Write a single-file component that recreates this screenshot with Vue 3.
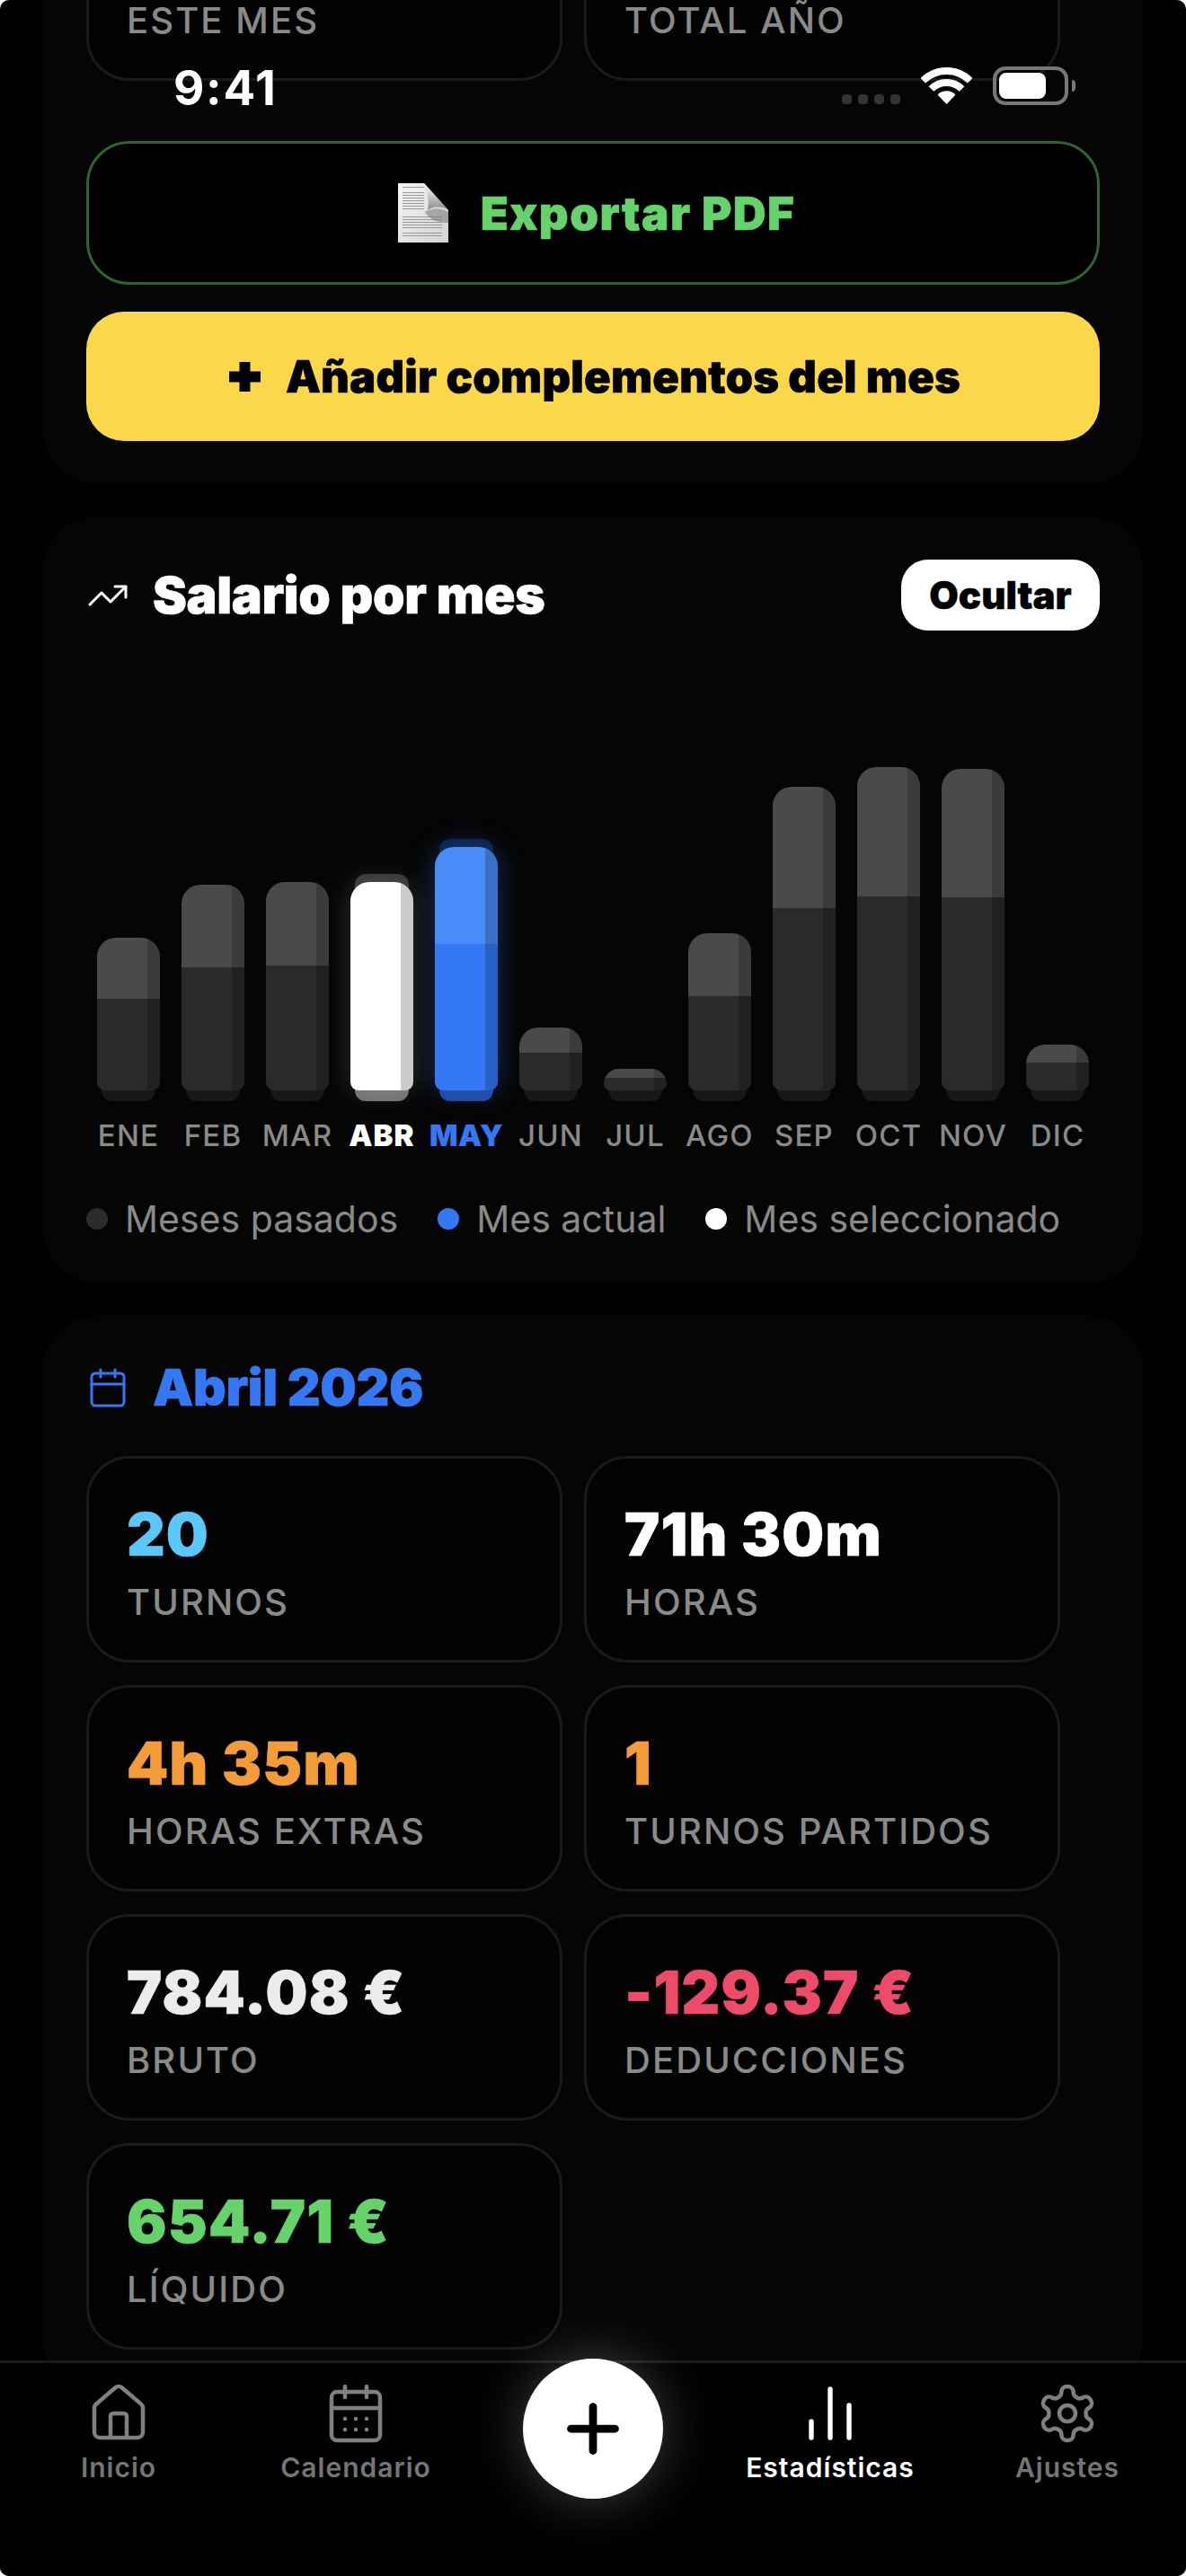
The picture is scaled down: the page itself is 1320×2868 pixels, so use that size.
<script setup>
const topStats = [
  { label: 'ESTE MES' },
  { label: 'TOTAL AÑO' },
]
const months = [
  { m: 'ENE', h: 170 }, { m: 'FEB', h: 229 }, { m: 'MAR', h: 232 },
  { m: 'ABR', h: 232, kind: 'sel' }, { m: 'MAY', h: 271, kind: 'now' }, { m: 'JUN', h: 70 },
  { m: 'JUL', h: 24 }, { m: 'AGO', h: 175 }, { m: 'SEP', h: 338 },
  { m: 'OCT', h: 360 }, { m: 'NOV', h: 358 }, { m: 'DIC', h: 51 },
]
const legend = [
  { t: 'Meses pasados', c: 'past' },
  { t: 'Mes actual', c: 'now' },
  { t: 'Mes seleccionado', c: 'sel' },
]
const stats = [
  { v: '20', l: 'TURNOS', c: 'sky' },
  { v: '71h 30m', l: 'HORAS', c: 'white' },
  { v: '4h 35m', l: 'HORAS EXTRAS', c: 'orange' },
  { v: '1', l: 'TURNOS PARTIDOS', c: 'orange' },
  { v: '784.08 €', l: 'BRUTO', c: 'soft' },
  { v: '-129.37 €', l: 'DEDUCCIONES', c: 'red' },
  { v: '654.71 €', l: 'LÍQUIDO', c: 'green' },
]
const docLines = [4, 10, 13, 16, 19, 22, 25, 28, 37, 40, 43, 46, 49, 55, 58]
</script>

<template>
  <div class="screen">
    <div class="status">
      <span class="time">9:41</span>
      <div class="status-right">
        <div class="cell"><i></i><i></i><i></i><i></i></div>
        <svg class="wifi" width="57" height="41" viewBox="0 0 57 41" fill="none" stroke="#fff" stroke-width="8">
          <path d="M2.3 14.8A37 37 0 0 1 54.7 14.8" />
          <path d="M11.5 24A24 24 0 0 1 45.5 24" />
          <path d="M28.5 41L18.5 30.5A14 14 0 0 1 38.5 30.5Z" fill="#fff" stroke="none" />
        </svg>
        <div class="battery"><div class="battery-fill"></div></div>
        <div class="nub"></div>
      </div>
    </div>

    <main class="main">
      <section class="card first">
        <div class="grid">
          <div v-for="s in topStats" :key="s.label" class="stat">
            <div class="val"></div>
            <div class="lab">{{ s.label }}</div>
          </div>
        </div>
        <button class="export">
          <svg width="56" height="66" viewBox="0 0 56 66">
            <defs>
              <linearGradient id="pg" x1="0" y1="0" x2="1" y2="1">
                <stop offset="0" stop-color="#f6f6f6" />
                <stop offset="1" stop-color="#d2d2d2" />
              </linearGradient>
              <linearGradient id="fg" x1="0" y1="0" x2="0" y2="1">
                <stop offset="0" stop-color="#ffffff" />
                <stop offset="1" stop-color="#8a8a8a" />
              </linearGradient>
            </defs>
            <path d="M0 0H29L56 30V66H0Z" fill="url(#pg)" />
            <rect v-for="y in docLines" :key="y" x="5" :y="y" :width="y < 30 ? 24 : 44" height="1" fill="#999" />
            <path d="M30 32C40 26 50 28 56 32V44C46 44 36 42 30 32Z" fill="#777" opacity=".55" />
            <path d="M29 0L56 30C48 25 38 26 33 30C35 20 33 10 29 0Z" fill="url(#fg)" />
          </svg>
          <span>Exportar PDF</span>
        </button>
        <button class="add">
          <svg width="35" height="33" viewBox="0 0 35 33"><path d="M11.5 0h12v10.5h11.500v12h-11.500v10.500h-12v-10.500H0v-12h11.500z" fill="#000" /></svg>
          <span>Añadir complementos del mes</span>
        </button>
      </section>

      <section class="card second">
        <header class="head spaced">
          <div class="title-wrap">
            <svg class="hicon" width="48" height="48" viewBox="0 0 24 24" fill="none" stroke="#fff" stroke-width="1.5" stroke-linecap="round" stroke-linejoin="round">
              <polyline points="22 7 13.5 15.5 8.5 10.5 2 17" />
              <polyline points="16 7 22 7 22 13" />
            </svg>
            <h2>Salario por mes</h2>
          </div>
          <button class="pill">Ocultar</button>
        </header>
        <div class="chart">
          <div v-for="b in months" :key="b.m" class="col">
            <div class="barwrap" :class="b.kind">
              <div v-if="b.kind" class="cap"></div>
              <div class="bar" :style="{ height: b.h + 'px' }">
                <div class="light"></div>
                <div class="dark"></div>
                <div class="side"></div>
              </div>
              <div class="foot"></div>
            </div>
          </div>
        </div>
        <div class="labels">
          <span v-for="b in months" :key="b.m" :class="b.kind">{{ b.m }}</span>
        </div>
        <div class="legend">
          <div v-for="l in legend" :key="l.t" class="leg">
            <i :class="l.c"></i><span>{{ l.t }}</span>
          </div>
        </div>
      </section>

      <section class="card third">
        <header class="head month">
          <svg class="hicon" width="48" height="48" viewBox="0 0 24 24" fill="none" stroke="#3478f6" stroke-width="1.5" stroke-linecap="round" stroke-linejoin="round">
            <path d="M8 2v4M16 2v4M3 10h18" />
            <rect x="3" y="4" width="18" height="18" rx="2" />
          </svg>
          <h2>Abril 2026</h2>
        </header>
        <div class="grid">
          <div v-for="s in stats" :key="s.l" class="stat">
            <div class="val" :class="s.c">{{ s.v }}</div>
            <div class="lab">{{ s.l }}</div>
          </div>
        </div>
      </section>
    </main>

    <nav class="tabs">
      <div class="tab">
        <svg width="72" height="72" viewBox="0 0 24 24" fill="none" stroke="currentColor" stroke-width="1.5" stroke-linecap="round" stroke-linejoin="round">
          <path d="M15 21v-8a1 1 0 0 0-1-1h-4a1 1 0 0 0-1 1v8" />
          <path d="M3 10a2 2 0 0 1 .709-1.528l7-5.999a2 2 0 0 1 2.582 0l7 5.999A2 2 0 0 1 21 10v9a2 2 0 0 1-2 2H5a2 2 0 0 1-2-2z" />
        </svg>
        <span>Inicio</span>
      </div>
      <div class="tab">
        <svg width="72" height="72" viewBox="0 0 24 24" fill="none" stroke="currentColor" stroke-width="1.5" stroke-linecap="round" stroke-linejoin="round">
          <path d="M8 2v4M16 2v4M3 10h18" />
          <rect x="3" y="4" width="18" height="18" rx="2" />
          <path d="M8 14h.01M12 14h.01M16 14h.01M8 18h.01M12 18h.01M16 18h.01" />
        </svg>
        <span>Calendario</span>
      </div>
      <div class="tab fab-tab">
        <button class="fab">
          <svg width="84" height="84" viewBox="0 0 24 24" fill="none" stroke="#000" stroke-width="2.5" stroke-linecap="round">
            <path d="M5 12h14M12 5v14" />
          </svg>
        </button>
      </div>
      <div class="tab active">
        <svg width="72" height="72" viewBox="0 0 24 24" fill="none" stroke="currentColor" stroke-width="1.8" stroke-linecap="round">
          <path d="M5 21v-6M12 21V3M19 21V9" />
        </svg>
        <span>Estadísticas</span>
      </div>
      <div class="tab">
        <svg width="72" height="72" viewBox="0 0 24 24" fill="none" stroke="currentColor" stroke-width="1.5" stroke-linecap="round" stroke-linejoin="round">
          <path d="M12.22 2h-.44a2 2 0 0 0-2 2v.18a2 2 0 0 1-1 1.73l-.43.25a2 2 0 0 1-2 0l-.15-.08a2 2 0 0 0-2.73.73l-.22.38a2 2 0 0 0 .73 2.73l.15.1a2 2 0 0 1 1 1.72v.51a2 2 0 0 1-1 1.74l-.15.09a2 2 0 0 0-.73 2.73l.22.38a2 2 0 0 0 2.73.73l.15-.08a2 2 0 0 1 2 0l.43.25a2 2 0 0 1 1 1.73V20a2 2 0 0 0 2 2h.44a2 2 0 0 0 2-2v-.18a2 2 0 0 1 1-1.73l.43-.25a2 2 0 0 1 2 0l.15.08a2 2 0 0 0 2.73-.73l.22-.39a2 2 0 0 0-.73-2.73l-.15-.08a2 2 0 0 1-1-1.74v-.5a2 2 0 0 1 1-1.74l.15-.09a2 2 0 0 0 .73-2.73l-.22-.38a2 2 0 0 0-2.73-.73l-.15.08a2 2 0 0 1-2 0l-.43-.25a2 2 0 0 1-1-1.73V4a2 2 0 0 0-2-2z" />
          <circle cx="12" cy="12" r="3" />
        </svg>
        <span>Ajustes</span>
      </div>
    </nav>
  </div>
</template>

<style>
html, body { margin: 0; background: #fff; }
</style>

<style scoped>
* { box-sizing: border-box; }
.screen {
  position: relative;
  width: 1320px;
  height: 2868px;
  background: #000;
  border-radius: 10px;
  overflow: hidden;
  display: flex;
  flex-direction: column;
  font-family: Inter, "Liberation Sans", sans-serif;
  color: #fff;
}
button { font-family: inherit; border: 0; margin: 0; padding: 0; }

.status {
  position: absolute;
  z-index: 5;
  top: 72px;
  left: 0;
  width: 100%;
  height: 52px;
  padding-left: 193px;
  display: flex;
  align-items: center;
  justify-content: space-between;
}
.time { font-size: 53px; font-weight: 700; line-height: 52px; letter-spacing: 1.7px; }
.status-right { display: flex; align-items: flex-end; padding-right: 123px; }
.cell { display: flex; gap: 7px; margin-right: 23px; margin-bottom: 7px; }
.cell i { width: 11px; height: 11px; border-radius: 4px; background: #333; }
.wifi { margin-bottom: 7px; }
.battery {
  margin-left: 23px;
  margin-bottom: 6px;
  width: 84px;
  height: 43px;
  border: 4px solid #777;
  border-radius: 14px;
  padding: 3px;
}
.battery-fill { width: 52px; height: 100%; background: #fff; border-radius: 8px; }
.nub { width: 4px; height: 13px; margin-left: 4px; margin-bottom: 21px; background: #777; border-radius: 0 4px 4px 0; }

.main { flex: 1; min-height: 0; overflow: hidden; padding: 0 48px; }
.card { background: #050505; border-radius: 60px; padding: 48px; margin-bottom: 37px; }
.first { margin-top: -188px; padding-bottom: 47px; }
.second { padding-bottom: 47px; }

.grid { display: grid; grid-template-columns: repeat(2, 530px); gap: 25px 24px; }
.stat {
  height: 230px;
  border: 3px solid #1a1a1a;
  border-radius: 48px;
  background: #030303;
  padding: 48px 42px 0;
}
.val { height: 72px; line-height: 72px; font-size: 66px; font-weight: 900; letter-spacing: 1.2px; -webkit-text-stroke: .6px currentColor; white-space: nowrap; }
.lab { margin-top: 16px; line-height: 48px; font-size: 40px; font-weight: 500; color: #8a8a8a; letter-spacing: 2.1px; white-space: nowrap; }
.sky { color: #5ac8fa; }
.white { color: #fff; }
.orange { color: #f49c38; }
.soft { color: #ececec; }
.red { color: #ee4a69; }
.green { color: #66d26a; }

.export {
  display: flex;
  align-items: center;
  justify-content: center;
  gap: 36px;
  width: 1128px;
  height: 160px;
  margin-top: 67px;
  padding-left: 8px;
  background: #000;
  border: 3px solid #326233;
  border-radius: 48px;
  color: #66d26b;
  font-size: 51px;
  font-weight: 900;
  letter-spacing: 1.4px;
  -webkit-text-stroke: .6px currentColor;
}
.add {
  display: flex;
  align-items: center;
  justify-content: center;
  gap: 28px;
  width: 1128px;
  height: 144px;
  margin-top: 30px;
  padding-left: 4px;
  background: #fad84a;
  border-radius: 42px;
  color: #000;
  font-size: 49px;
  font-weight: 900;
  letter-spacing: .2px;
  -webkit-text-stroke: .6px currentColor;
}

.head { display: flex; align-items: center; }
.spaced { justify-content: space-between; height: 79px; }
.title-wrap { display: flex; align-items: center; }
.hicon { flex: none; margin-right: 26px; }
h2 { margin: 0; font-size: 57px; font-weight: 900; line-height: 64px; letter-spacing: -.35px; -webkit-text-stroke: .6px currentColor; }
.pill {
  width: 221px;
  height: 79px;
  border-radius: 30px;
  background: #fff;
  color: #000;
  font-size: 42px;
  font-weight: 900;
  -webkit-text-stroke: .4px currentColor;
}

.chart { height: 524px; display: grid; grid-template-columns: repeat(12, 1fr); align-items: end; justify-items: center; }
.barwrap { position: relative; width: 70px; isolation: isolate; }
.bar {
  position: relative;
  display: flex;
  flex-direction: column;
  overflow: hidden;
  border-radius: 21px 21px 9px 9px;
}
.light { height: 40%; background: #4a4a4a; }
.dark { flex: 1; background: #2a2a2a; }
.side { position: absolute; top: 0; right: 0; bottom: 0; width: 14px; background: rgba(0, 0, 0, .2); }
.foot {
  position: relative;
  z-index: -1;
  width: 60px;
  height: 21px;
  margin: -9px auto 0;
  border-radius: 0 0 12px 12px;
  background: #171717;
}
.cap { position: absolute; z-index: -1; top: -9px; left: 5px; right: 5px; height: 40px; border-radius: 12px 12px 0 0; }
.sel .light, .sel .dark { background: #fff; }
.sel .bar { box-shadow: 0 0 30px rgba(255, 255, 255, .18); }
.sel .foot { background: #707070; }
.sel .cap { background: #333; }
.now .light { background: #4a8cf7; }
.now .dark { background: #3478f6; }
.now .bar { box-shadow: 0 0 30px rgba(52, 120, 246, .35); }
.now .foot { background: #1f4aa0; }
.now .cap { background: #0c1f42; }

.labels { display: grid; grid-template-columns: repeat(12, 1fr); margin-top: 20px; text-align: center; font-size: 33px; font-weight: 500; line-height: 36px; letter-spacing: 1.2px; color: #8a8a8a; }
.labels .sel { color: #fff; font-weight: 900; letter-spacing: 1px; }
.labels .now { color: #3478f6; font-weight: 900; letter-spacing: .4px; }

.legend { display: flex; gap: 44px; margin-top: 51px; font-size: 41px; line-height: 48px; color: #8a8a8a; }
.leg { display: flex; align-items: center; gap: 19px; }
.leg i { width: 24px; height: 24px; border-radius: 50%; }
.leg .past { background: #2c2c2c; }
.leg .now { background: #3478f6; }
.leg .sel { background: #fff; }

.month { height: 64px; margin-bottom: 44px; }
.month h2 { color: #3478f6; }

.tabs {
  flex: none;
  height: 240px;
  display: grid;
  grid-template-columns: repeat(5, 1fr);
  background: #000;
  border-top: 3px solid #1a1a1a;
}
.tab { display: flex; flex-direction: column; align-items: center; padding-top: 20px; color: #808080; }
.tab span { margin-top: 6px; font-size: 30px; line-height: 36px; font-weight: 600; letter-spacing: 1px; color: #757575; }
.active { color: #fff; }
.active span { color: #fff; }
.fab-tab { padding-top: 0; }
.fab {
  width: 156px;
  height: 156px;
  margin-top: -5px;
  border-radius: 50%;
  background: #fff;
  display: flex;
  align-items: center;
  justify-content: center;
  box-shadow: 0 0 60px rgba(255, 255, 255, .25);
}
</style>
